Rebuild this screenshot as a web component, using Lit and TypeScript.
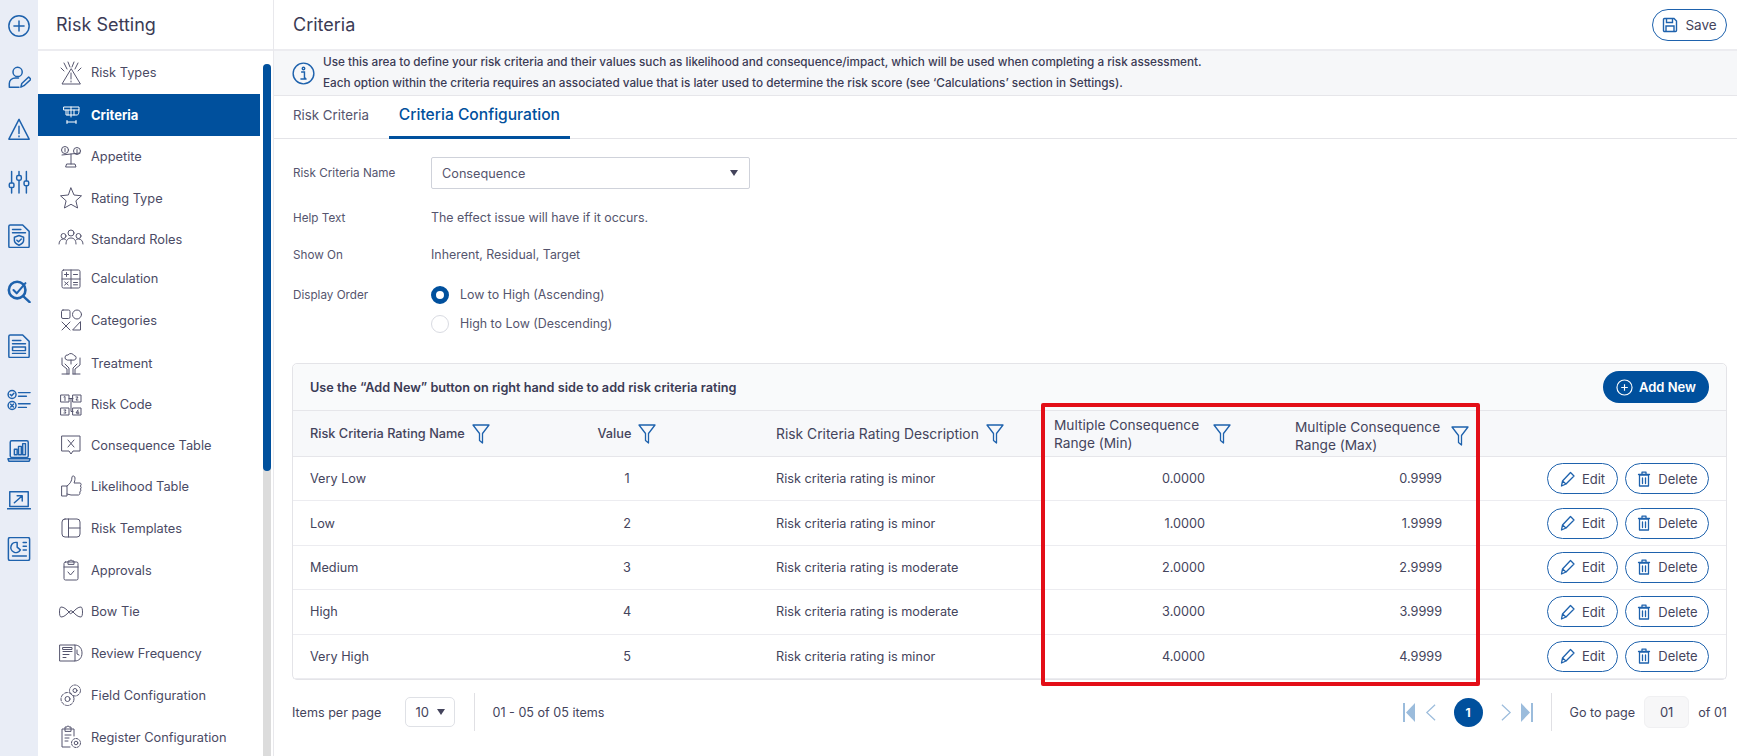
import { LitElement, html, css, svg } from "lit";
import { customElement } from "lit/decorators.js";

const railIcons = [
  { h: 51, i: svg`<circle cx="13" cy="13" r="11"/><path d="M13 7.500v11M7.500 13h11"/>` },
  { h: 52, i: svg`<circle cx="11.500" cy="7.500" r="5"/><path d="M2.500 24v-4c0-3.500 3-6 6.500-6h3.500M2.500 24H13"/><path d="M15 24l1-4 7.500-7 2.400 2.400-7.500 7z"/>` },
  { h: 52, i: svg`<path d="M13 2.500L2 24h22z"/><path d="M13 10v8M13 20.500v1"/>` },
  { h: 53, i: svg`<path d="M5 1.500v12M5 20v5M13 1.500v4M13 12v13M21 1.500v10M21 18v7"/><rect x="2.500" y="14" width="5" height="5" rx="1.500"/><rect x="10.500" y="6" width="5" height="5" rx="1.500"/><rect x="18.500" y="12" width="5" height="5" rx="1.500"/>` },
  { h: 55, i: svg`<path d="M2 2.500A1.500 1.500 0 0 1 3.500 1H17l7 7v16a1.500 1.500 0 0 1-1.500 1.500h-19A1.500 1.500 0 0 1 2 24z"/><path d="M6 6h9M6 9.500h14"/><path d="M13 12.500l5 1.800v3.700c0 2.200-2.200 3.800-5 5-2.800-1.200-5-2.800-5-5v-3.700z"/><path d="M10.700 17.500l1.800 1.800 3-3"/>` },
  { h: 55, i: svg`<circle cx="11" cy="12" r="9" stroke-width="2.800"/><path d="M7 12l3.500 3.500L20 4.500" stroke-width="2.200"/><path d="M17.500 18.500l7 6.500" stroke-width="2.600"/>` },
  { h: 56, i: svg`<path d="M2 2.500A1.500 1.500 0 0 1 3.500 1H17l7 7v16a1.500 1.500 0 0 1-1.500 1.500h-19A1.500 1.500 0 0 1 2 24z"/><path d="M6 7h9M6 10.500h14M6 21h14"/><rect x="6" y="14" width="14" height="4"/>` },
  { h: 52, i: svg`<circle cx="5.500" cy="7" r="4.300"/><path d="M3.500 7l1.500 1.500 2.500-2.800M12.500 5H25M12.500 9H21"/><circle cx="5.500" cy="19" r="4.300"/><path d="M4 17.500l3 3M7 17.500l-3 3M12.500 17H25M12.500 21H21"/>` },
  { h: 49, i: svg`<rect x="3.500" y="2" width="19.500" height="18" rx="1.500"/><path d="M1 21.500h24l-1 2.500H2z"/><rect x="8" y="11" width="3" height="6"/><rect x="12.500" y="8" width="3" height="9"/><rect x="17" y="5" width="3" height="12"/>` },
  { h: 49, i: svg`<rect x="3" y="4" width="20" height="16"/><path d="M.5 22.500h25M8 16l8-7M11 8.500h5.500V14"/>` },
  { h: 50, i: svg`<rect x="1.500" y="0.500" width="23" height="25" rx="2"/><path d="M11 6v5l3.500 3a5.500 5.500 0 1 1-3.500-8z"/><path d="M17.500 6h3.500M17.500 10h3.500M17.500 14h3.500M6 20.500h15"/>` },
];

const S = (c: unknown) => html`<svg class="nav-ic" viewBox="0 0 26 26">${c}</svg>`;
const navItems = [
  { t: "Risk Types", h: 43, i: svg`<path d="M13 9L4 24h18z"/><path d="M13 13v6M13 21v1M6 3l3 6M20 3l-3 6M10 2l2 5M16 2l-2 5M3 8l3 3M23 8l-3 3"/>` },
  { t: "Criteria", h: 42, active: true, i: svg`<path d="M6 5h15v3H6zM8 8v5h11c1 0 2-1 2-5M10 8v5M13 5v10M16 8v5M9 20h9M9 18.500v3M18 18.500v3"/>` },
  { t: "Appetite", h: 41, i: svg`<circle cx="7" cy="6" r="3.500"/><circle cx="19" cy="7" r="3.500"/><path d="M7 4.500v3M19 5.500v3M4 11l18-2M13 10v10M8 23h10l-1-3H9z"/>` },
  { t: "Rating Type", h: 42, i: svg`<path d="M13 3l3 7 7.500.800-5.600 5 1.700 7.200L13 19.300 6.400 23l1.700-7.200-5.600-5L10 10z"/>` },
  { t: "Standard Roles", h: 40, i: svg`<circle cx="13" cy="7" r="3"/><circle cx="5.500" cy="10" r="2.500"/><circle cx="20.500" cy="10" r="2.500"/><path d="M8 18c0-4 2-6 5-6s5 2 5 6M1 18c0-3 2-5 4.500-5 1 0 2 .300 2.500 1M25 18c0-3-2-5-4.500-5-1 0-2 .300-2.500 1"/>` },
  { t: "Calculation", h: 39, i: svg`<rect x="4" y="4" width="18" height="18" rx="1.500"/><path d="M13 4v18M4 13h18M6.500 8.500h4M8.500 6.500v4M15.500 8.500h4M6.700 16l3.500 3M10.200 16l-3.500 3M15.500 16.500h4M15.500 18.800h4"/>` },
  { t: "Categories", h: 44, i: svg`<rect x="3.500" y="3" width="8.500" height="8.500" rx="1.500"/><circle cx="19" cy="7.500" r="4.500"/><path d="M4 15l8 8M12 15l-8 8M22.500 15v8H15z"/>` },
  { t: "Treatment", h: 42, i: svg`<path d="M9 10a2.500 2.500 0 0 1 1-5 3.500 3.500 0 0 1 6 .500 2.300 2.300 0 0 1 .500 4.500zM13 10v4"/><path d="M4 8v7l5 4v5M22 8v7l-5 4v5M7 14l4 4v6M19 14l-4 4v6M4 24h7M15 24h7"/>` },
  { t: "Risk Code", h: 41, i: svg`<rect x="3" y="3" width="8" height="7"/><rect x="15" y="3" width="8" height="7"/><rect x="3" y="16" width="8" height="7"/><rect x="15" y="16" width="8" height="7"/><path d="M11 6.500h2v13h2M15 6.500h-2M6 5l1-.500v4M18 5h2l-2 3h2M6 18h2l-1 1.500 1 1.500H6M20 18l-2 3h3M20 19v3"/>` },
  { t: "Consequence Table", h: 40, i: svg`<path d="M4 4h18v15h-7l-2 3-2-3H4zM10 8l6 7M16 8l-6 7"/>` },
  { t: "Likelihood Table", h: 42, i: svg`<rect x="4" y="13" width="5" height="10"/><path d="M9 13c3-2 5-5 5-9 0-1.500 3-1.500 3 1 0 2-.500 4-1 5h6c1.500 0 1.500 3 0 3 1.500 0 1.500 3 0 3 1.500 0 1 3-.500 3 1 0 .500 3-1 3H13l-4-1"/>` },
  { t: "Risk Templates", h: 42, i: svg`<rect x="4" y="4" width="18" height="18" rx="3"/><path d="M10.500 4v18M10.500 13H22"/>` },
  { t: "Approvals", h: 42, i: svg`<rect x="6" y="5" width="14" height="18" rx="1.500"/><path d="M10 7V4h2a1 1 0 0 1 2 0h2v3zM6 10h14M10 15l2.500 3 3.500-4"/>` },
  { t: "Bow Tie", h: 41, i: svg`<path d="M11 13C8 10 6 8 3 8c-2 0-2 10 0 10 3 0 5-2 8-5zM15 13c3-3 5-5 8-5 2 0 2 10 0 10-3 0-5-2-8-5zM11 13l2-1.500 2 1.500-2 1.500z"/>` },
  { t: "Review Frequency", h: 42, i: svg`<path d="M2 5h15v16H2zM5 11.500h9M5 14.500h6M5 17.500h3M17 5c4 0 7 3 7 8s-3 8-7 8M19 10v4l2 1"/><rect x="5" y="7.500" width="9" height="2"/>` },
  { t: "Field Configuration", h: 42, i: svg`<circle cx="9.500" cy="17" r="2.500"/><circle cx="9.500" cy="17" r="6.500" stroke-dasharray="3 1.500"/><circle cx="17" cy="8.500" r="2"/><circle cx="17" cy="8.500" r="5.500" stroke-dasharray="2.600 1.400"/>` },
  { t: "Register Configuration", h: 42, i: svg`<path d="M12 23H4V5h12v7M7 7V3h2a1 1 0 0 1 2 0h2v4zM7 11h6M7 14h4M7 17h3"/><circle cx="18" cy="19" r="1.800"/><circle cx="18" cy="19" r="4.500" stroke-dasharray="2.200 1.200"/>` },
];

const rows = [
  ["Very Low", "1", "Risk criteria rating is minor", "0.0000", "0.9999"],
  ["Low", "2", "Risk criteria rating is minor", "1.0000", "1.9999"],
  ["Medium", "3", "Risk criteria rating is moderate", "2.0000", "2.9999"],
  ["High", "4", "Risk criteria rating is moderate", "3.0000", "3.9999"],
  ["Very High", "5", "Risk criteria rating is minor", "4.0000", "4.9999"],
];

const filter = html`<svg class="filter" viewBox="0 0 18 20"><path d="M1 1h16l-6.500 8.500V19l-3-2.500v-7z"/></svg>`;
const pencil = html`<svg class="btn-ic" viewBox="0 0 16 16"><path d="M1.500 15l1-5 8-8.500 3.500 3.500-8 8zM2.500 10l3.500 3"/></svg>`;
const trash = html`<svg class="btn-ic" viewBox="0 0 16 16"><path d="M2.500 3.500h11M6 3V1.200h4V3M3.500 4h9v11h-9zM6.500 7v5.500M9.500 7v5.500"/></svg>`;

@customElement("app-root")
export class AppRoot extends LitElement {
  static styles = css`
    :host {
      display: flex;
      height: 756px;
      width: 1737px;
      overflow: hidden;
      background: #fff;
      font-family: Inter, "Liberation Sans", sans-serif;
      font-size: 12.700px;
      color: #44445c;
      box-sizing: border-box;
    }
    * { box-sizing: border-box; }
    .rail { width: 38px; flex: none; background: #e9edf6; display: flex; flex-direction: column; align-items: center; }
    .rail-slot { display: flex; align-items: center; justify-content: center; flex: none; width: 36px; }
    .rail-slot svg { width: 24px; height: 24px; fill: none; stroke: #1e62ad; stroke-width: 1.600; stroke-linecap: round; stroke-linejoin: round; }
    .side { width: 236px; flex: none; border-right: 1px solid #e8e8ec; display: flex; flex-direction: column; height: 756px; }
    .side-head { height: 51px; flex: none; border-bottom: 2px solid #ececf0; padding-left: 18px; display: flex; align-items: center; font-size: 18px; color: #3b3b55; }
    .side-body { flex: 1; display: flex; min-height: 0; }
    .nav { width: 222px; flex: none; }
    .nav-item { display: flex; align-items: center; padding-left: 20px; gap: 7px; color: #4a4a64; font-size: 12.800px; white-space: nowrap; }
    .nav-item.active { background: #00509d; color: #fff; font-weight: 700; font-size: 13px; }
    .nav-ic { width: 26px; height: 26px; flex: none; fill: none; stroke: #55556e; stroke-width: 1; stroke-linecap: round; stroke-linejoin: round; }
    .active .nav-ic { stroke: #fff; }
    .track { width: 8px; margin-left: 3px; background: #dcdcdc; border-radius: 4px 4px 0 0; margin-top: 13px; }
    .thumb { height: 407px; background: #00509d; border-radius: 4px; }
    .main { flex: 1; min-width: 0; display: flex; flex-direction: column; }
    .top { height: 51px; flex: none; border-bottom: 2px solid #ececf0; display: flex; align-items: center; justify-content: space-between; padding: 0 10px 0 19px; font-size: 18px; color: #3b3b55; }
    .save { display: flex; align-items: center; gap: 7px; height: 32px; width: 75px; border: 1.500px solid #1e62ad; border-radius: 16px; justify-content: center; font-size: 13.500px; color: #44445c; }
    .save svg { width: 16px; height: 16px; fill: none; stroke: #1e62ad; stroke-width: 1.400; flex: none; }
    .info { height: 45px; background: #f6f7f9; border-bottom: 1px solid #e6e6ea; display: flex; align-items: center; padding-left: 18px; gap: 8px; font-size: 11.740px; font-weight: 500; line-height: 21px; color: #3b3b55; flex: none; }
    .info svg { width: 23px; height: 23px; flex: none; fill: none; stroke: #1e62ad; stroke-width: 1.500; }
    .tabs { height: 43px; flex: none; border-bottom: 1px solid #e4e4e8; display: flex; padding-left: 19px; align-items: stretch; }
    .tab { display: flex; align-items: center; font-size: 13.300px; color: #55556e; margin-right: 20px; padding-bottom: 4px; }
    .tab.on { color: #00509d; font-size: 15.600px; font-weight: 500; padding: 0 10px 3px; border-bottom: 3px solid #00509d; height: 43px; margin-right: 0; }
    .form { padding: 18px 0 0 19px; flex: none; display: grid; grid-template-columns: 138px 1fr; font-size: 11.700px; align-items: center; color: #55556e; }
    .val { font-size: 12.400px; }
    .select { width: 319px; height: 32px; border: 1px solid #cfd2da; border-radius: 2px; display: flex; align-items: center; justify-content: space-between; padding: 0 11px 0 10px; font-size: 12.700px; }
    .caret { width: 0; height: 0; border-left: 4px solid transparent; border-right: 4px solid transparent; border-top: 6px solid #44445c; flex: none; }
    .r-help { height: 20px; margin-top: 19px; line-height: 20px; }
    .r-show { height: 20px; margin-top: 17px; line-height: 20px; }
    .r-order { height: 20px; margin-top: 20px; line-height: 20px; }
    .r-second { height: 20px; margin-top: 9px; line-height: 20px; }
    .radio-line { display: flex; align-items: center; gap: 11px; font-size: 12.400px; }
    .radio { width: 18px; height: 18px; border-radius: 50%; border: 1px solid #d9dbe2; flex: none; }
    .radio.on { border: 5px solid #00509d; }
    .card { position: relative; margin: 29px 10px 0 18px; height: 317px; border: 1px solid #e4e4e8; border-radius: 5px; flex: none; }
    .card-head { height: 47px; background: #f9fafb; border-bottom: 1px solid #e6e6ea; display: flex; align-items: center; justify-content: space-between; padding: 0 17px 0 17px; font-weight: 600; font-size: 12.700px; color: #3b3b55; border-radius: 5px 5px 0 0; }
    .add { display: flex; align-items: center; gap: 6px; height: 32px; width: 106px; justify-content: center; background: #00509d; color: #fff; border-radius: 16px; font-weight: 600; font-size: 13px; }
    .add svg { width: 17px; height: 17px; fill: none; stroke: #fff; stroke-width: 1.200; }
    .grid { display: grid; grid-template-columns: 284px 100px 366px 218px 221px 244px; align-items: center; }
    .thead { height: 46px; background: #f7f8fa; border-bottom: 1px solid #e6e6ea; font-weight: 500; font-size: 12.750px; color: #44445c; }
    .row { height: 44.400px; border-bottom: 1px solid #ececf0; }
    .row:last-child { border-bottom: 0; }
    .th { display: flex; align-items: center; gap: 7px; white-space: nowrap; }
    .c1 { padding-left: 17px; }
    .c2 { justify-content: center; text-align: center; }
    .c3 { padding-left: 99px; }
    .c3h { font-size: 13.850px; font-weight: 400; }
    .c4h { padding-left: 11px; line-height: 18px; justify-content: flex-start; gap: 0; font-size: 13.700px; font-weight: 400; }
    .c5h { padding-left: 34px; line-height: 18px; padding-top: 4px; gap: 0; font-size: 13.700px; font-weight: 400; }
    .two { white-space: normal; }
    .c4h .two { width: 159px; }
    .c5h .two { width: 156px; }
    .c4 { text-align: right; padding-right: 56px; }
    .c5 { text-align: right; padding-right: 40px; }
    .c6 { display: flex; justify-content: flex-end; gap: 7px; padding-right: 17px; }
    .filter { width: 18px; height: 20px; flex: none; fill: none; stroke: #1e62ad; stroke-width: 1.300; stroke-linejoin: round; }
    .btn { height: 31px; border: 1.300px solid #1e62ad; border-radius: 16px; display: flex; align-items: center; justify-content: center; gap: 6px; font-size: 13px; color: #44445c; }
    .btn.e { width: 71px; }
    .btn.d { width: 84px; }
    .btn-ic { width: 16px; height: 16px; fill: none; stroke: #1e62ad; stroke-width: 1.300; stroke-linejoin: round; stroke-linecap: round; flex: none; }
    .redbox { position: absolute; left: 748px; top: 39px; width: 439px; height: 283px; border: 4.500px solid #e30e17; border-radius: 2px; pointer-events: none; }
    .pager { display: flex; align-items: center; margin: 13px 10px 0 18px; height: 38px; font-size: 12.600px; }
    .pp-sel { width: 50px; height: 30px; margin-left: 24px; border: 1px solid #dfe1e6; border-radius: 5px; display: flex; align-items: center; justify-content: space-between; padding: 0 9px; font-size: 13px; }
    .vr { width: 1px; height: 38px; background: #e0e0e4; margin: 0 18px; flex: none; }
    .vr.first { margin: 0 17px 0 19px; }
    .spacer { flex: 1; }
    .nums { display: flex; align-items: center; }
    .nums svg { fill: #9bbcdc; stroke: none; height: 19px; }
    .nums .ch { fill: none; stroke: #9bbcdc; stroke-width: 1.300; }
    .cur { width: 29px; height: 29px; border-radius: 50%; background: #00509d; color: #fff; display: flex; align-items: center; justify-content: center; font-weight: 700; font-size: 12px; margin: 0 18px; }
    .goto { width: 45px; height: 32px; background: #f7f7f8; border: 1px solid #f0f0f2; border-radius: 6px; display: flex; align-items: center; justify-content: center; margin: 0 9px; font-size: 13px; }
  `;

  render() {
    return html`
      <div class="rail">
        ${railIcons.map((r) => html`<div class="rail-slot" style="height:${r.h}px"><svg viewBox="0 0 26 26">${r.i}</svg></div>`)}
      </div>
      <div class="side">
        <div class="side-head">Risk Setting</div>
        <div class="side-body">
          <div class="nav">
            ${navItems.map((n) => html`<div class="nav-item ${n.active ? "active" : ""}" style="height:${n.h}px">${S(n.i)}<span>${n.t}</span></div>`)}
          </div>
          <div class="track"><div class="thumb"></div></div>
        </div>
      </div>
      <div class="main">
        <div class="top">
          <span>Criteria</span>
          <div class="save"><svg viewBox="0 0 16 16"><path d="M1.500 2.500a1 1 0 0 1 1-1H12l2.500 2.500v9.500a1 1 0 0 1-1 1h-11a1 1 0 0 1-1-1zM4.500 1.500v4h6v-4M4 14.500V9h8v5.500"/></svg>Save</div>
        </div>
        <div class="info">
          <svg viewBox="0 0 24 24"><circle cx="12" cy="12" r="10.800"/><circle cx="12" cy="6.800" r="1.300"/><path d="M9.500 10.500H13V17h1.500M8.800 17.700h6.400"/></svg>
          <div>Use this area to define your risk criteria and their values such as likelihood and consequence/impact, which will be used when completing a risk assessment.<br />Each option within the criteria requires an associated value that is later used to determine the risk score (see ‘Calculations’ section in Settings).</div>
        </div>
        <div class="tabs">
          <div class="tab">Risk Criteria</div>
          <div class="tab on">Criteria Configuration</div>
        </div>
        <div class="form">
          <div>Risk Criteria Name</div>
          <div class="select">Consequence<span class="caret"></span></div>
          <div class="r-help">Help Text</div>
          <div class="r-help val">The effect issue will have if it occurs.</div>
          <div class="r-show">Show On</div>
          <div class="r-show val">Inherent, Residual, Target</div>
          <div class="r-order">Display Order</div>
          <div class="r-order radio-line"><span class="radio on"></span>Low to High (Ascending)</div>
          <div class="r-second"></div>
          <div class="r-second radio-line"><span class="radio"></span>High to Low (Descending)</div>
        </div>
        <div class="card">
          <div class="card-head">
            <span>Use the “Add New” button on right hand side to add risk criteria rating</span>
            <div class="add"><svg viewBox="0 0 18 18"><circle cx="9" cy="9" r="8"/><path d="M9 5.500v7M5.500 9h7"/></svg>Add New</div>
          </div>
          <div class="grid thead">
            <div class="th c1">Risk Criteria Rating Name ${filter}</div>
            <div class="th c2">Value ${filter}</div>
            <div class="th c3 c3h">Risk Criteria Rating Description ${filter}</div>
            <div class="th c4h"><span class="two">Multiple Consequence Range (Min)</span>${filter}</div>
            <div class="th c5h"><span class="two">Multiple Consequence Range (Max)</span>${filter}</div>
            <div></div>
          </div>
          ${rows.map(
            (r) => html`<div class="grid row">
              <div class="c1">${r[0]}</div>
              <div class="c2">${r[1]}</div>
              <div class="c3">${r[2]}</div>
              <div class="c4">${r[3]}</div>
              <div class="c5">${r[4]}</div>
              <div class="c6">
                <div class="btn e">${pencil}Edit</div>
                <div class="btn d">${trash}Delete</div>
              </div>
            </div>`
          )}
          <div class="redbox"></div>
        </div>
        <div class="pager">
          <span>Items per page</span>
          <div class="pp-sel">10<span class="caret"></span></div>
          <div class="vr first"></div>
          <span>01 - 05 of 05 items</span>
          <div class="spacer"></div>
          <div class="nums">
            <svg viewBox="0 0 12 19" style="width:12px"><rect x="0" y="0" width="2" height="19"/><path d="M12 0v19L3 9.500z"/></svg>
            <svg class="ch" viewBox="0 0 12 19" style="width:11px;margin-left:10px"><path d="M11 1L2 9.500l9 8.500"/></svg>
            <div class="cur">1</div>
            <svg class="ch" viewBox="0 0 12 19" style="width:11px;margin-right:9px;"><path d="M1 1l9 8.500L1 18"/></svg>
            <svg viewBox="0 0 12 19" style="width:12px"><rect x="10" y="0" width="2" height="19"/><path d="M0 0v19l9-9.500z"/></svg>
          </div>
          <div class="vr"></div>
          <span>Go to page</span>
          <div class="goto">01</div>
          <span>of 01</span>
        </div>
      </div>
    `;
  }
}
